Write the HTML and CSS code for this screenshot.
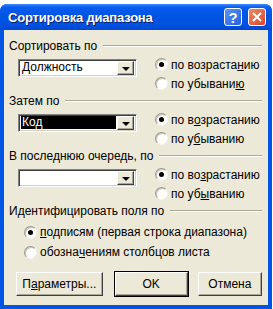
FILE: index.html
```html
<!DOCTYPE html>
<html lang="ru">
<head>
    <meta charset="UTF-8">
    <title>Сортировка диапазона</title>
    <link rel="stylesheet" href="styles.css">
</head>
<body>
    <div class="window">
        <div class="titlebar">
            <span class="title">Сортировка диапазона</span>
            <span class="tb-btn help">?</span>
            <span class="tb-btn close">
                <svg width="10" height="10" viewBox="0 0 10 10"><path d="M1 1 L9 9 M9 1 L1 9" stroke="#fff" stroke-width="2"/></svg>
            </span>
        </div>

        <div class="dialog">
            <!-- первый ключ -->
            <div class="group">
                <div class="group-head"><span>Сортировать по</span><i class="rule"></i></div>
                <div class="group-row">
                    <div class="combo"><span class="combo-text">Должность</span><span class="combo-btn"></span></div>
                    <div class="radios">
                        <label class="radio"><span class="dot on"></span>по возраста<u>н</u>ию</label>
                        <label class="radio"><span class="dot"></span>по убывани<u>ю</u></label>
                    </div>
                </div>
            </div>

            <!-- второй ключ -->
            <div class="group">
                <div class="group-head"><span>Затем по</span><i class="rule"></i></div>
                <div class="group-row">
                    <div class="combo"><span class="combo-text selected">Код</span><span class="combo-btn"></span></div>
                    <div class="radios">
                        <label class="radio"><span class="dot on"></span>по в<u>о</u>зрастанию</label>
                        <label class="radio"><span class="dot"></span>по у<u>б</u>ыванию</label>
                    </div>
                </div>
            </div>

            <!-- третий ключ -->
            <div class="group">
                <div class="group-head"><span>В последнюю очередь, по</span><i class="rule"></i></div>
                <div class="group-row">
                    <div class="combo"><span class="combo-text"></span><span class="combo-btn"></span></div>
                    <div class="radios">
                        <label class="radio"><span class="dot on"></span>по во<u>з</u>растанию</label>
                        <label class="radio"><span class="dot"></span>по уб<u>ы</u>ванию</label>
                    </div>
                </div>
            </div>

            <div class="group">
                <div class="group-head"><span>Идентифицировать поля по</span><i class="rule"></i></div>
                <div class="radios wide">
                    <label class="radio"><span class="dot on"></span><u>п</u>одписям (первая строка диапазона)</label>
                    <label class="radio"><span class="dot"></span>обозна<u>ч</u>ениям столбцов листа</label>
                </div>
            </div>

            <div class="buttons">
                <button class="btn params">П<u>а</u>раметры...</button>
                <button class="btn default">OK</button>
                <button class="btn cancel">Отмена</button>
            </div>
        </div>
    </div>
</body>
</html>
```

FILE: styles.css
```css
body {
    margin: 0;
    background: #fff;
    font-family: "Liberation Sans", Arial, sans-serif;
    font-size: 12px;
}

.window {
    margin-top: 4px;
    width: 272px;
    height: 305px;
    display: flex;
    flex-direction: column;
    box-sizing: border-box;
    border-radius: 7px 7px 0 0;
    background: #0055e5;
}

.titlebar {
    height: 26px;
    display: flex;
    align-items: center;
    padding: 0 6px 0 8px;
    border-radius: 7px 7px 0 0;
    background: linear-gradient(#3d8dfc 0, #0a5df0 12%, #0054e3 45%, #0052e0 80%, #0046cf 100%);
}

.title {
    flex: 1;
    color: #fff;
    font-weight: bold;
    font-size: 13px;
    letter-spacing: -0.2px;
    text-shadow: 1px 1px #0a1f6e;
}

.tb-btn {
    width: 18px;
    height: 18px;
    box-sizing: border-box;
    border: 1px solid #fff;
    border-radius: 3px;
    display: flex;
    align-items: center;
    justify-content: center;
    margin-left: 6px;
    color: #fff;
    font-weight: bold;
    font-size: 15px;
}

.help {
    background: linear-gradient(135deg, #5a94f8, #2460e0);
}

.close {
    background: linear-gradient(135deg, #ea8a6a, #d8462a);
}

.dialog {
    flex: 1;
    margin: 0 4px 4px 4px;
    background: #ece9d8;
    padding: 8px 6px 0 5px;
}

.group {
    height: 55px;
}

.group-head {
    display: flex;
    align-items: center;
    height: 15px;
}

.rule {
    flex: 1;
    margin-left: 6px;
    border-top: 1px solid #aca899;
    border-bottom: 1px solid #fff;
}

.group-row {
    display: flex;
    margin-top: 2px;
}

.combo {
    margin: 4px 0 0 9px;
    width: 119px;
    height: 18px;
    box-sizing: border-box;
    display: flex;
    border: 1px solid;
    border-color: #808080 #fff #fff #808080;
    box-shadow: inset 1px 1px #404040, inset -1px -1px #d4d0c8;
    background: #fff;
    padding: 2px;
}

.combo-text {
    flex: 1;
    line-height: 13px;
    margin-top: -1px;
    margin-right: 1px;
    padding-left: 1px;
}

.combo-text.selected {
    background: #000;
    color: #fff;
}

.combo-btn {
    width: 17px;
    margin: -1px 0;
    box-sizing: border-box;
    background: #ece9d8;
    border: 1px solid;
    border-color: #fff #404040 #404040 #fff;
    box-shadow: inset -1px -1px #aca899;
    position: relative;
}

.combo-btn::after {
    content: "";
    position: absolute;
    left: 4px;
    top: 5px;
    border-left: 4px solid transparent;
    border-right: 4px solid transparent;
    border-top: 4px solid #000;
}

.radios {
    margin-left: 18px;
    display: flex;
    flex-direction: column;
}

.radios.wide {
    margin: 4px 0 0 15px;
}

.radio {
    height: 19px;
    display: flex;
    align-items: center;
}

.wide .radio {
    height: 20px;
}

.dot {
    width: 13px;
    height: 13px;
    box-sizing: border-box;
    border-radius: 50%;
    margin-right: 3px;
    background: #fff;
    border: 1px solid;
    border-color: #9a9888 #f4f3ee #f4f3ee #9a9888;
    box-shadow: inset 1px 1px #c8c6b8;
    display: flex;
    align-items: center;
    justify-content: center;
}

.dot.on::after {
    content: "";
    width: 5px;
    height: 5px;
    border-radius: 50%;
    background: #000;
}

.buttons {
    display: flex;
    margin-top: 14px;
    padding-left: 7px;
}

.btn {
    font: inherit;
    height: 24px;
    background: #ece9d8;
    border: 1px solid;
    border-color: #fff #404040 #404040 #fff;
    box-shadow: inset -1px -1px #aca899;
    width: 75px;
    padding: 0;
}

.btn.params {
    width: 89px;
    margin-right: 12px;
}

.btn.default {
    outline: 1px solid #000;
    margin-right: 10px;
}

.btn.cancel {
    width: 66px;
}
```
